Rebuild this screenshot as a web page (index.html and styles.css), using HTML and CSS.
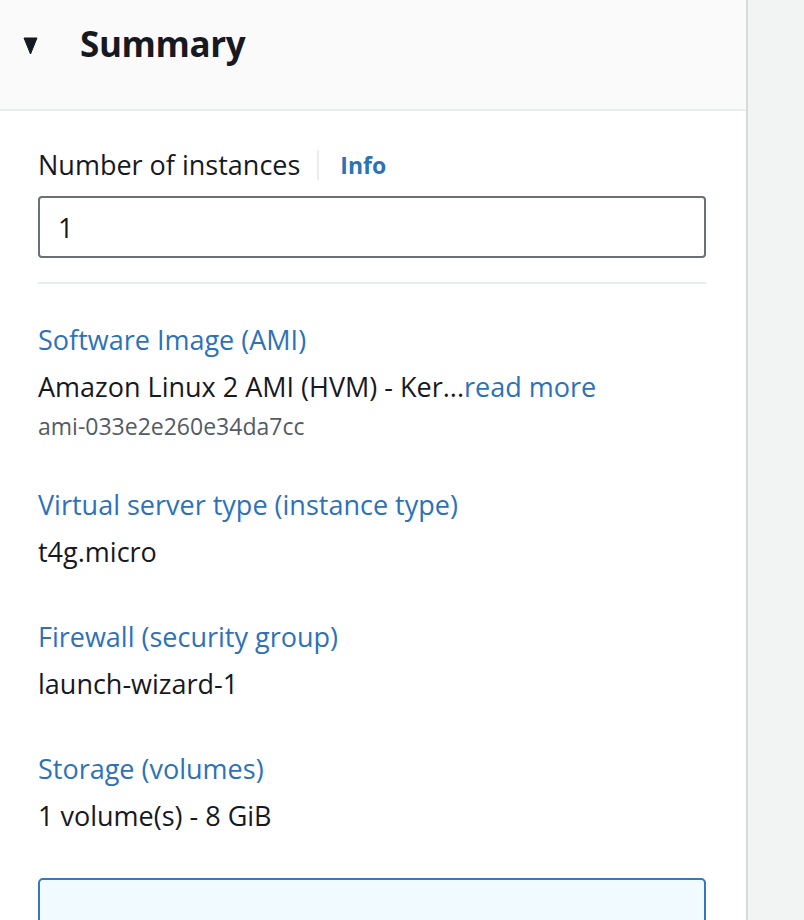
FILE: index.html
```html
<!DOCTYPE html>
<html>
<head>
<meta charset="utf-8">
<link rel="stylesheet" href="styles.css">
</head>
<body>
<div class="page">
  <section class="panel">
    <header class="panel-header">
      <svg class="caret" width="13" height="16" viewBox="0 0 13 16"><polygon points="0,0 13,0 6.5,16" fill="#16191f" stroke="#16191f" stroke-width="1" stroke-linejoin="round"/></svg>
      <h2 class="title">Summary</h2>
    </header>
    <div class="panel-body">
      <div class="field-label">
        <span>Number of instances</span>
        <span class="sep"></span>
        <a class="info">Info</a>
      </div>
      <div class="input">1</div>
      <hr class="divider">
      <div class="item">
        <a class="item-label">Software Image (AMI)</a>
        <div class="item-value">Amazon Linux 2 AMI (HVM) - Ker...<a class="more">read more</a></div>
        <div class="item-sub">ami-033e2e260e34da7cc</div>
      </div>
      <div class="item">
        <a class="item-label">Virtual server type (instance type)</a>
        <div class="item-value">t4g.micro</div>
      </div>
      <div class="item">
        <a class="item-label">Firewall (security group)</a>
        <div class="item-value">launch-wizard-1</div>
      </div>
      <div class="item">
        <a class="item-label">Storage (volumes)</a>
        <div class="item-value">1 volume(s) - 8 GiB</div>
      </div>
      <div class="notice"></div>
    </div>
  </section>
  <aside class="side"></aside>
</div>
</body>
</html>
```
FILE: styles.css
```css
* { box-sizing: border-box; }
html, body { margin: 0; padding: 0; }
body {
  font-family: "Open Sans", "Noto Sans", sans-serif;
  color: #16191f;
  background: #f2f3f3;
  width: 804px;
  height: 920px;
  overflow: hidden;
}
.page { display: flex; height: 920px; }
.panel {
  width: 748px;
  flex-shrink: 0;
  background: #fff;
  border-right: 2px solid #d5dbdb;
  box-shadow: 1px 0 1px rgba(0,0,0,0.05);
  display: flex;
  flex-direction: column;
}
.side { flex: 1; background: #f2f3f3; }
.panel-header {
  flex-shrink: 0;
  height: 111px;
  background: #fafafa;
  border-bottom: 2px solid #eaeded;
  display: flex;
  align-items: center;
  padding-left: 24px;
  padding-bottom: 22px;
}
.caret { margin-right: 43px; margin-top: 4px; overflow: visible; }
.title {
  margin: 0;
  font-size: 35px;
  font-weight: 700;
  letter-spacing: -0.4px;
}
.panel-body {
  padding: 38px 40px 0 38px;
  display: flex;
  flex-direction: column;
}
.field-label {
  display: flex;
  align-items: center;
  font-size: 27px;
  line-height: 32px;
}
.sep {
  width: 2px;
  height: 30px;
  background: #eaeded;
  margin: 0 21px 0 17px;
}
.info {
  color: #2d72b8;
  font-weight: 700;
  font-size: 23px;
}
.input {
  flex-shrink: 0;
  margin-top: 15px;
  height: 62px;
  border: 2px solid #687078;
  border-radius: 4px;
  padding: 0 18px;
  display: flex;
  align-items: center;
  font-size: 27px;
}
.divider {
  margin: 24px 0 0;
  border: 0;
  height: 2px;
  background: #eaeded;
}
.item { display: flex; flex-direction: column; margin-top: 40px; }
.item + .item { margin-top: 53px; }
.item-label {
  color: #2d72b8;
  font-size: 27px;
  line-height: 32px;
}
.item-value {
  margin-top: 15px;
  font-size: 27px;
  line-height: 32px;
}
.more { color: #2d72b8; }
.item-sub {
  margin-top: 13px;
  font-size: 23px;
  line-height: 20px;
  color: #545b64;
}
.notice {
  flex-shrink: 0;
  margin-top: 46px;
  height: 80px;
  border: 2px solid #3878b8;
  border-radius: 5px;
  background: #f1faff;
}
```
